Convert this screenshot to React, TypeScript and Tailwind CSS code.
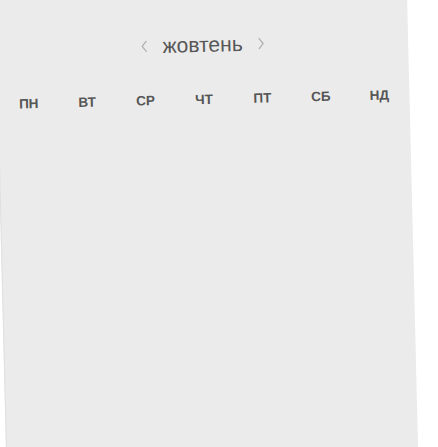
import React from "react";

const days = ["ПН", "ВТ", "СР", "ЧТ", "ПТ", "СБ", "НД"];

function Chevron({ dir }: { dir: "left" | "right" }) {
  return (
    <svg width="8" height="12" viewBox="0 0 8 12" fill="none" className="shrink-0">
      <path
        d={dir === "left" ? "M6 1 L2 6 L6 11" : "M2 1 L6 6 L2 11"}
        stroke="#b0b0b0"
        strokeWidth="1.3"
        strokeLinecap="round"
        strokeLinejoin="round"
      />
    </svg>
  );
}

export default function App() {
  return (
    <div className="w-[438px] h-[447px] overflow-hidden bg-white font-['Liberation_Sans',Arial,sans-serif]">
      <div className="w-[412px] h-[480px] -ml-[5px] origin-top-left rotate-[-1.4deg] bg-[#ebebeb] border-l border-[#e0e0e0]">
        <div className="flex items-center justify-center gap-[14px] pt-[38px]">
          <Chevron dir="left" />
          <span className="text-[21px] leading-[24px] text-[#575757]">жовтень</span>
          <Chevron dir="right" />
        </div>
        <div className="grid grid-cols-7 mt-[36px] px-[1px]">
          {days.map((d) => (
            <div key={d} className="text-center text-[13.5px] leading-[14px] font-bold text-[#555555]">
              {d}
            </div>
          ))}
        </div>
      </div>
    </div>
  );
}
